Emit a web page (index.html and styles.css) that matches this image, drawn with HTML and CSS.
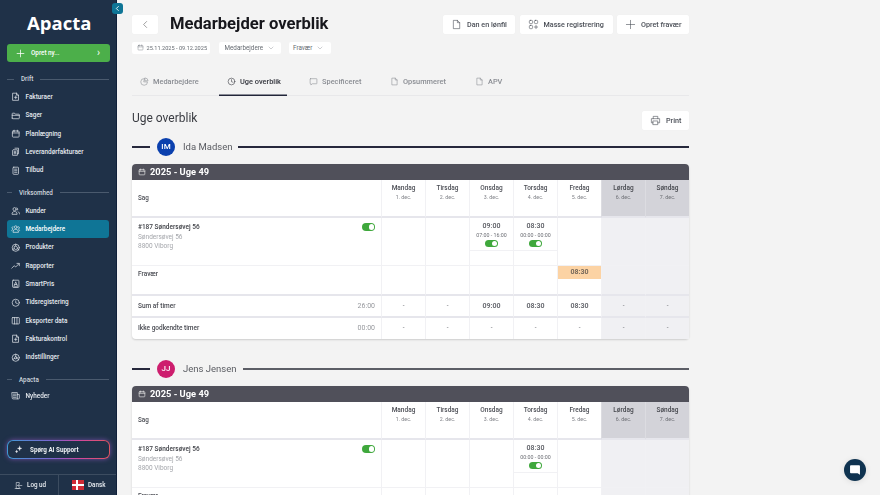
FILE: index.html
```html
<!DOCTYPE html>
<html lang="da">
<head>
<meta charset="utf-8">
<title>Medarbejder overblik</title>
<link rel="stylesheet" href="styles.css">
</head>
<body>
<svg class="defs" width="0" height="0" aria-hidden="true">
  <symbol id="i-file" viewBox="0 0 24 24"><path d="M6 3h8l5 5v13H6zM14 3v5h5"/></symbol>
  <symbol id="i-invoice" viewBox="0 0 24 24"><path d="M5 3h9l5 5v13H5zM14 3v5h5M12 10v7M9 13.500h6"/></symbol>
  <symbol id="i-folder" viewBox="0 0 24 24"><path d="M3 18V7a1.500 1.500 0 0 1 1.500-1.500H9l2 2.500h8.500A1.500 1.500 0 0 1 21 9.500V18a1.500 1.500 0 0 1-1.500 1.500h-15A1.500 1.500 0 0 1 3 18zM3 11h18"/></symbol>
  <symbol id="i-cal" viewBox="0 0 24 24"><rect x="3.500" y="5" width="17" height="15.500" rx="2"/><path d="M3.500 10h17M8 3v4M16 3v4"/></symbol>
  <symbol id="i-files" viewBox="0 0 24 24"><path d="M10 3h9v14h-3M6 7h10v14H4V9zM8 11h4M8 14h4M8 17h4"/></symbol>
  <symbol id="i-doc" viewBox="0 0 24 24"><rect x="5" y="3" width="14" height="18" rx="2"/><path d="M9 8h6M9 12h6M9 16h6"/></symbol>
  <symbol id="i-users" viewBox="0 0 24 24"><circle cx="9" cy="8" r="4"/><path d="M2.500 20c0-4 3-6 6.500-6s6.500 2 6.500 6zM15 4.500a4 4 0 0 1 0 7M18 14.500c2 .8 3.500 2.500 3.500 5.500"/></symbol>
  <symbol id="i-team" viewBox="0 0 24 24"><circle cx="12" cy="8" r="3.500"/><path d="M5 20c0-4 3-6.500 7-6.500s7 2.500 7 6.500zM5.500 7a2.500 2.500 0 0 0-1 5M18.500 7a2.500 2.500 0 0 1 1 5M2 17c0-2 .8-3 2.500-3.500M22 17c0-2-.8-3-2.500-3.500"/></symbol>
  <symbol id="i-box" viewBox="0 0 24 24"><circle cx="12" cy="12" r="9"/><path d="M12 8l4 2.500v4L12 17l-4-2.500v-4zM12 8V3M16 14.500l4 2.500M8 14.500L4 17"/></symbol>
  <symbol id="i-trend" viewBox="0 0 24 24"><path d="M2 18l6-6 4 3 8-8M15 6h6v6"/></symbol>
  <symbol id="i-price" viewBox="0 0 24 24"><rect x="4" y="3" width="16" height="18" rx="1.500"/><path d="M8 17l4-10 4 10M9.500 14h5M7 20h10"/></symbol>
  <symbol id="i-clock" viewBox="0 0 24 24"><circle cx="12" cy="12" r="9"/><path d="M12 7v5.500l4 1.500"/></symbol>
  <symbol id="i-cols" viewBox="0 0 24 24"><rect x="3" y="4" width="18" height="16" rx="1.500"/><path d="M9 4v16M15 4v16"/></symbol>
  <symbol id="i-gear" viewBox="0 0 24 24"><circle cx="12" cy="12" r="9"/><circle cx="12" cy="12" r="3"/><path d="M12 3v6M4.500 16.500L9.500 13.500M19.500 16.500l-5-3"/></symbol>
  <symbol id="i-news" viewBox="0 0 24 24"><path d="M3 4h13v16H5a2 2 0 0 1-2-2zM16 9h5v9a2 2 0 0 1-2 2h-3M6 8h7M6 12h7M6 16h7"/></symbol>
  <symbol id="i-pie" viewBox="0 0 24 24"><path d="M11 4a9 9 0 1 0 9 9h-9zM14 2.500A8 8 0 0 1 21.500 10H14z"/></symbol>
  <symbol id="i-chat" viewBox="0 0 24 24"><path d="M4 4.500h16a1 1 0 0 1 1 1V17a1 1 0 0 1-1 1H9l-4 3v-3H4a1 1 0 0 1-1-1V5.500a1 1 0 0 1 1-1z"/></symbol>
  <symbol id="i-plus" viewBox="0 0 24 24"><path d="M12 3v18M3 12h18"/></symbol>
  <symbol id="i-apps" viewBox="0 0 24 24"><rect x="3" y="3" width="7" height="7" rx="2"/><rect x="14" y="3" width="7" height="7" rx="2"/><rect x="3" y="14" width="7" height="7" rx="2"/><path d="M17.500 14v7M14 17.500h7"/></symbol>
  <symbol id="i-print" viewBox="0 0 24 24"><path d="M7 8V3h10v5M7 17H3V8h18v9h-4M7 13h10v8H7z"/></symbol>
  <symbol id="i-chev-d" viewBox="0 0 24 24"><path d="M4 8l8 8 8-8"/></symbol>
  <symbol id="i-spark" viewBox="0 0 24 24"><path d="M15 3l1.500 4.500L21 9l-4.500 1.500L15 15l-1.500-4.500L9 9l4.500-1.500zM7 14l1 2.500 2.500 1L8 18.500 7 21l-1-2.500-2.500-1L6 16.500z"/></symbol>
  <symbol id="i-logout" viewBox="0 0 24 24"><path d="M14 8V4H6v16h8v-4M3 20h14M21 12H10M13 9l-3 3 3 3"/></symbol>
</svg>

<div class="app">
  <aside class="sidebar">
    <div class="logo">Apacta</div>
    <button class="new-btn"><svg class="ico-plus"><use href="#i-plus"/></svg><span>Opret ny...</span><span class="new-chev">›</span></button>

    <div class="sec-label"><span>Drift</span></div>
    <nav class="nav">
      <a class="nav-item"><svg class="ico"><use href="#i-invoice"/></svg>Fakturaer</a>
      <a class="nav-item"><svg class="ico"><use href="#i-folder"/></svg>Sager</a>
      <a class="nav-item"><svg class="ico"><use href="#i-cal"/></svg>Planlægning</a>
      <a class="nav-item"><svg class="ico"><use href="#i-files"/></svg>Leverandørfakturaer</a>
      <a class="nav-item"><svg class="ico"><use href="#i-doc"/></svg>Tilbud</a>
    </nav>

    <div class="sec-label sec-mid"><span>Virksomhed</span></div>
    <nav class="nav">
      <a class="nav-item"><svg class="ico"><use href="#i-users"/></svg>Kunder</a>
      <a class="nav-item active"><svg class="ico"><use href="#i-team"/></svg>Medarbejdere</a>
      <a class="nav-item"><svg class="ico"><use href="#i-box"/></svg>Produkter</a>
      <a class="nav-item"><svg class="ico"><use href="#i-trend"/></svg>Rapporter</a>
      <a class="nav-item"><svg class="ico"><use href="#i-price"/></svg>SmartPris</a>
      <a class="nav-item"><svg class="ico"><use href="#i-clock"/></svg>Tidsregistering</a>
      <a class="nav-item"><svg class="ico"><use href="#i-cols"/></svg>Eksporter data</a>
      <a class="nav-item"><svg class="ico"><use href="#i-invoice"/></svg>Fakturakontrol</a>
      <a class="nav-item"><svg class="ico"><use href="#i-gear"/></svg>Indstillinger</a>
    </nav>

    <div class="sec-label sec-last"><span>Apacta</span></div>
    <nav class="nav nav-last">
      <a class="nav-item"><svg class="ico"><use href="#i-news"/></svg>Nyheder</a>
    </nav>

    <button class="ai-btn"><span class="ai-inner"><svg class="ico-spark"><use href="#i-spark"/></svg>Spørg AI Support</span></button>

    <div class="side-foot">
      <a class="foot-cell foot-log"><svg class="ico-log"><use href="#i-logout"/></svg>Log ud</a>
      <a class="foot-cell foot-lang"><span class="flag"></span>Dansk</a>
    </div>
  </aside>

  <button class="collapse"><svg viewBox="0 0 24 24"><path d="M15 5l-7 7 7 7"/></svg></button>

  <main class="main">
    <header class="top">
      <button class="card-btn back"><svg viewBox="0 0 24 24"><path d="M15 4l-8 8 8 8"/></svg></button>
      <h1>Medarbejder overblik</h1>
      <div class="actions">
        <button class="card-btn act act-a"><svg><use href="#i-file"/></svg>Dan en lønfil</button>
        <button class="card-btn act act-b"><svg><use href="#i-apps"/></svg>Masse registrering</button>
        <button class="card-btn act act-c"><svg><use href="#i-plus"/></svg>Opret fravær</button>
      </div>
    </header>

    <div class="filters">
      <span class="chip chip-date"><svg><use href="#i-cal"/></svg>25.11.2025 - 09.12.2025</span>
      <span class="chip chip-emp">Medarbejdere<svg class="cv"><use href="#i-chev-d"/></svg></span>
      <span class="chip chip-abs">Fravær<svg class="cv"><use href="#i-chev-d"/></svg></span>
    </div>

    <div class="tabs">
      <a class="tab t1"><svg><use href="#i-pie"/></svg>Medarbejdere</a>
      <a class="tab t2 active"><svg><use href="#i-clock"/></svg>Uge overblik</a>
      <a class="tab t3"><svg><use href="#i-chat"/></svg>Specificeret</a>
      <a class="tab t4"><svg><use href="#i-file"/></svg>Opsummeret</a>
      <a class="tab t5"><svg><use href="#i-file"/></svg>APV</a>
    </div>

    <div class="section-head">
      <h2>Uge overblik</h2>
      <button class="card-btn print"><svg><use href="#i-print"/></svg>Print</button>
    </div>

    <section class="person">
      <div class="person-line"><span class="rule short"></span><span class="avatar av-blue">IM</span><span class="pname">Ida Madsen</span><span class="rule"></span></div>
      <div class="week">
        <div class="week-head"><svg><use href="#i-cal"/></svg>2025 - Uge 49</div>
        <div class="grid">
          <div class="c hd sag">Sag</div>
          <div class="c hd day"><b>Mandag</b><i>1. dec.</i></div>
          <div class="c hd day"><b>Tirsdag</b><i>2. dec.</i></div>
          <div class="c hd day"><b>Onsdag</b><i>3. dec.</i></div>
          <div class="c hd day"><b>Torsdag</b><i>4. dec.</i></div>
          <div class="c hd day"><b>Fredag</b><i>5. dec.</i></div>
          <div class="c hd day we"><b>Lørdag</b><i>6. dec.</i></div>
          <div class="c hd day we"><b>Søndag</b><i>7. dec.</i></div>

          <div class="c job r-job"><div class="job-top"><span class="job-title">#187 Søndersøvej 56</span><span class="tog"></span></div><div class="addr">Søndersøvej 56</div><div class="addr">8800 Viborg</div></div>
          <div class="c r-job"></div>
          <div class="c r-job"></div>
          <div class="c r-job entry-cell"><div class="entry"><b>09:00</b><i>07:00 - 16:00</i><span class="tog"></span></div></div>
          <div class="c r-job entry-cell"><div class="entry"><b>08:30</b><i>00:00 - 00:00</i><span class="tog"></span></div></div>
          <div class="c r-job"></div>
          <div class="c r-job wl"></div>
          <div class="c r-job wl"></div>

          <div class="c r-abs lbl">Fravær</div>
          <div class="c r-abs"></div>
          <div class="c r-abs"></div>
          <div class="c r-abs"></div>
          <div class="c r-abs"></div>
          <div class="c r-abs"><div class="abs-tag">08:30</div></div>
          <div class="c r-abs wl"></div>
          <div class="c r-abs wl"></div>

          <div class="c r-sum sumlbl"><span>Sum af timer</span><em>26:00</em></div>
          <div class="c r-sum val">-</div>
          <div class="c r-sum val">-</div>
          <div class="c r-sum val b">09:00</div>
          <div class="c r-sum val b">08:30</div>
          <div class="c r-sum val b">08:30</div>
          <div class="c r-sum val wl">-</div>
          <div class="c r-sum val wl">-</div>

          <div class="c r-un sumlbl"><span>Ikke godkendte timer</span><em>00:00</em></div>
          <div class="c r-un val">-</div>
          <div class="c r-un val">-</div>
          <div class="c r-un val">-</div>
          <div class="c r-un val">-</div>
          <div class="c r-un val">-</div>
          <div class="c r-un val wl">-</div>
          <div class="c r-un val wl">-</div>
        </div>
      </div>
    </section>

    <section class="person">
      <div class="person-line"><span class="rule short"></span><span class="avatar av-pink">JJ</span><span class="pname">Jens Jensen</span><span class="rule grey"></span></div>
      <div class="week">
        <div class="week-head"><svg><use href="#i-cal"/></svg>2025 - Uge 49</div>
        <div class="grid">
          <div class="c hd sag">Sag</div>
          <div class="c hd day"><b>Mandag</b><i>1. dec.</i></div>
          <div class="c hd day"><b>Tirsdag</b><i>2. dec.</i></div>
          <div class="c hd day"><b>Onsdag</b><i>3. dec.</i></div>
          <div class="c hd day"><b>Torsdag</b><i>4. dec.</i></div>
          <div class="c hd day"><b>Fredag</b><i>5. dec.</i></div>
          <div class="c hd day we"><b>Lørdag</b><i>6. dec.</i></div>
          <div class="c hd day we"><b>Søndag</b><i>7. dec.</i></div>

          <div class="c job r-job"><div class="job-top"><span class="job-title">#187 Søndersøvej 56</span><span class="tog"></span></div><div class="addr">Søndersøvej 56</div><div class="addr">8800 Viborg</div></div>
          <div class="c r-job"></div>
          <div class="c r-job"></div>
          <div class="c r-job"></div>
          <div class="c r-job entry-cell"><div class="entry"><b>08:30</b><i>00:00 - 00:00</i><span class="tog"></span></div></div>
          <div class="c r-job"></div>
          <div class="c r-job wl"></div>
          <div class="c r-job wl"></div>

          <div class="c r-abs lbl">Fravær</div>
          <div class="c r-abs"></div>
          <div class="c r-abs"></div>
          <div class="c r-abs"></div>
          <div class="c r-abs"></div>
          <div class="c r-abs"></div>
          <div class="c r-abs wl"></div>
          <div class="c r-abs wl"></div>
        </div>
      </div>
    </section>
  </main>

  <button class="chat-bubble"><svg viewBox="0 0 24 24"><path d="M5 4h14a1.500 1.500 0 0 1 1.500 1.500V20l-4-2.500H5A1.500 1.500 0 0 1 3.500 16V5.500A1.500 1.500 0 0 1 5 4z"/></svg></button>
</div>
</body>
</html>
```

FILE: styles.css
```css
* { box-sizing: border-box; }
html, body { margin: 0; height: 495px; overflow: hidden; }
body { font-family: Roboto, "Liberation Sans", sans-serif; background: #f3f3f3; color: #1c1c22; }
button { font-family: inherit; border: 0; padding: 0; margin: 0; background: none; }
i, em { font-style: normal; }
svg { fill: none; stroke: currentColor; stroke-width: 1.5; stroke-linecap: round; stroke-linejoin: round; }
.defs { position: absolute; }

.app { display: flex; height: 495px; position: relative; overflow: hidden; filter: blur(.3px); }

/* sidebar */
.sidebar { width: 117px; flex: none; height: 495px; background: #1f3148; border-right: 1px solid #10203a; display: flex; flex-direction: column; color: #e7ebf0; padding: 0; }
.logo { height: 44px; padding: 10px 0 0 27px; font-family: "Open Sans", Roboto, sans-serif; font-size: 18.500px; line-height: 26px; font-weight: 700; color: #fff; }
.new-btn { margin-left: 7px; width: 103px; height: 18px; border-radius: 3px; background: #4caf4a; color: #fff; display: flex; align-items: center; font-size: 6.300px; font-weight: 500; padding: 0 10px 0 9px; flex: none; }
.ico-plus { width: 9px; height: 9px; margin-right: 6px; stroke-width: 2; }
.new-chev { margin-left: auto; font-size: 10px; line-height: 10px; font-weight: 400; }
.sec-label { display: flex; align-items: center; margin: 11px 7px 0; height: 12px; font-size: 6.300px; font-weight: 500; color: #cfd6de; flex: none; }
.sec-label::before { content: ""; width: 7px; height: 1px; background: #4a5a6e; margin-right: 7px; }
.sec-label::after { content: ""; flex: 1; height: 1px; background: #4a5a6e; margin-left: 7px; }
.sec-mid { margin-top: 7px; }
.sec-mid::before { width: 5px; margin-right: 7px; }
.sec-last { margin-top: 7px; }
.sec-last::before { width: 5px; margin-right: 7px; }
.nav { display: flex; flex-direction: column; margin-top: 3px; }
.nav-last { margin-top: 1px; }
.nav-item { height: 18.330px; margin: 0 7px; padding-left: 4px; border-radius: 3px; display: flex; align-items: center; font-size: 6.400px; font-weight: 500; color: #e6eaef; white-space: nowrap; }
.nav-item.active { background: #0f7596; color: #fff; }
.ico { width: 9.500px; height: 9.500px; margin-right: 5px; flex: none; stroke-width: 1.800; color: #e3e7ec; }

.ai-btn { margin: auto 0 0 7px; width: 103px; height: 19px; border-radius: 6px; padding: 1px; flex: none; background: linear-gradient(90deg, #3f9bd6, #7d62d0 45%, #d0489e 70%, #df5560); box-shadow: 0 0 5px rgba(150, 90, 200, .7); }
.ai-inner { display: flex; align-items: center; height: 100%; background: #1f3148; border-radius: 5px; font-size: 6.300px; font-weight: 700; color: #f0f2f5; padding-left: 6px; }
.ico-spark { width: 9px; height: 9px; margin-right: 7px; fill: #f0f2f5; stroke-width: .8; }
.side-foot { margin-top: 15px; height: 21px; border-top: 1px solid #3c4c60; display: flex; flex: none; }
.foot-cell { display: flex; align-items: center; font-size: 6.300px; font-weight: 500; color: #e7ebf0; }
.foot-log { width: 59px; border-right: 1px solid #3c4c60; padding-left: 14px; }
.ico-log { width: 9px; height: 9px; margin-right: 4px; }
.foot-lang { padding-left: 13px; }
.flag { width: 12px; height: 10px; margin-right: 4px; background:
  linear-gradient(#fff, #fff) 4px 0 / 2px 100% no-repeat,
  linear-gradient(#fff, #fff) 0 4px / 100% 2px no-repeat, #cf2b36; }

.collapse { position: absolute; left: 112px; top: 3px; width: 11px; height: 11px; border-radius: 3px; background: #0f7596; color: #fff; display: flex; align-items: center; justify-content: center; z-index: 2; }
.collapse svg { width: 7px; height: 7px; stroke-width: 3; }

/* main */
.main { flex: none; width: 763px; padding: 15px 0 0 15px; }
.main > * { width: 557px; }
.card-btn { background: #fff; border-radius: 2px; box-shadow: 0 0 1px rgba(0,0,0,.06); display: flex; align-items: center; color: #4b4f57; font-size: 7.200px; font-weight: 500; height: 18.500px; }
.card-btn svg { flex: none; }

.top { display: flex; align-items: center; height: 18.500px; }
.back { width: 26px; justify-content: center; color: #555; flex: none; }
.back svg { width: 9px; height: 9px; stroke-width: 1.500; }
h1 { margin: 0 0 0 12px; font-size: 16.600px; font-weight: 700; line-height: 18px; color: #17171c; white-space: nowrap; }
.actions { margin-left: auto; display: flex; gap: 4.500px; }
.act { padding-left: 8px; white-space: nowrap; }
.act svg { width: 11px; height: 11px; margin-right: 5px; stroke-width: 1.300; }
.act-a { width: 72px; }
.act-b { width: 93px; }
.act-c { width: 72px; }

.filters { display: flex; margin-top: 8.500px; height: 12px; }
.chip { background: #fff; border-radius: 2px; display: flex; align-items: center; color: #666b72; height: 11.500px; white-space: nowrap; }
.chip svg { width: 7px; height: 7px; margin-right: 3px; stroke-width: 1.300; }
.chip .cv { margin: 0 0 0 5px; width: 6px; height: 6px; }
.chip-date { width: 78px; padding-left: 4.500px; font-size: 5.600px; }
.chip-emp { width: 62px; margin-left: 9px; padding-left: 5.500px; font-size: 6.300px; }
.chip-abs { width: 42px; margin-left: 7.500px; padding-left: 4.500px; font-size: 6.300px; }

.tabs { display: flex; margin-top: 14px; height: 28px; border-bottom: 1px solid #e8e8ea; position: relative; }
.tab { display: flex; align-items: center; height: 28px; font-size: 7.400px; font-weight: 500; color: #8a8d93; white-space: nowrap; padding-bottom: 1px; }
.tab svg { width: 9px; height: 9px; margin-right: 4px; stroke-width: 1.500; }
.t1 { margin-left: 8px; width: 79px; }
.t2 { width: 68px; padding-left: 8px; color: #33353d; font-weight: 500; box-shadow: inset 0 -1.500px 0 #22263a; }
.t3 { margin-left: 22px; width: 81px; }
.t4 { width: 85px; }

.section-head { display: flex; align-items: center; justify-content: space-between; margin-top: 14.500px; height: 19px; }
h2 { margin: 0 0 4px; font-size: 12px; font-weight: 400; line-height: 14px; color: #3a3c42; }
.print { width: 47px; padding-left: 7.500px; height: 19px; }
.print svg { width: 11px; height: 11px; margin-right: 5.500px; stroke-width: 1.300; }

.person { height: 222px; padding-top: 8px; }
.person-line { display: flex; align-items: center; height: 18px; font-size: 9.500px; color: #5a5c62; }
.rule { flex: 1; height: 2px; background: #26283c; }
.rule.grey { background: #5c5e66; }
.rule.short { flex: none; width: 18px; }
.avatar { width: 18px; height: 18px; border-radius: 50%; color: #fff; display: flex; align-items: center; justify-content: center; font-size: 8px; font-weight: 500; margin-left: 7px; flex: none; }
.av-blue { background: #0b40ae; }
.av-pink { background: #cd1e6e; }
.pname { margin: 0 6px 0 8px; white-space: nowrap; }

.week { margin-top: 8px; border-radius: 4px; box-shadow: 0 1px 2px rgba(0,0,0,.16); background: #fff; }
.week-head { height: 16px; background: #50505a; border-radius: 4px 4px 0 0; color: #fff; font-size: 9.300px; font-weight: 700; display: flex; align-items: center; padding-left: 6px; }
.week-head svg { width: 8px; height: 8px; margin-right: 4px; stroke-width: 2; color: #e6e6e6; }

.grid { display: grid; grid-template-columns: 249px repeat(7, 44px); grid-template-rows: 38px 48px 30px 22px 21.500px; font-size: 6.300px; color: #4a4c53; }
.c { border-left: 1px solid #f1f1f4; border-bottom: 1px solid #f1f1f4; min-width: 0; }
.hd { border-bottom: 2px solid #e6e6ec; }
.sag { border-left: 0; display: flex; align-items: center; padding-left: 6px; font-weight: 500; }
.day { display: flex; flex-direction: column; align-items: center; padding-top: 4px; }
.day b { font-size: 6.500px; line-height: 9px; font-weight: 500; color: #4d4f56; }
.day i { font-size: 5.300px; line-height: 8px; color: #7d7f85; }
.we { background: #d3d3d9; border-left-color: #dcdce1; }
.we b { color: #44464c; }
.we i { color: #6c6e74; }
.wl { background: #f0f0f3; }
.job { border-left: 0; padding: 5px 6px; }
.job-top { display: flex; justify-content: space-between; align-items: center; height: 9px; margin-bottom: 1px; }
.job-title { font-weight: 500; color: #3f4147; font-size: 6.500px; }
.addr { color: #a4a6ab; line-height: 9.500px; font-size: 6.500px; }
.tog { display: block; width: 13px; height: 7.500px; border-radius: 4px; background: #3fa83c; position: relative; flex: none; }
.tog::after { content: ""; position: absolute; right: 1px; top: 1px; width: 5.500px; height: 5.500px; border-radius: 50%; background: #fff; }
.entry { height: 33px; border-bottom: 1px solid #f1f1f4; display: flex; flex-direction: column; align-items: center; padding-top: 4px; }
.entry b { font-size: 7px; line-height: 9px; font-weight: 500; color: #55575e; }
.entry i { font-size: 5.300px; line-height: 8px; color: #6c6e74; margin-bottom: 1px; }
.lbl { border-left: 0; padding: 4px 6px; color: #4a4c53; font-weight: 500; font-size: 6.500px; }
.abs-tag { height: 13px; background: #fcd3a4; color: #77695a; display: flex; align-items: center; justify-content: center; font-weight: 700; font-size: 7px; }
.r-abs { border-bottom: 2px solid #e6e6ec; }
.r-sum { border-bottom: 2px solid #e6e6ec; }
.r-un { border-bottom: 0; }
.sumlbl { border-left: 0; display: flex; justify-content: space-between; align-items: center; padding: 0 6px; font-weight: 500; font-size: 6.500px; }
.sumlbl em { color: #96989d; font-size: 7px; font-weight: 400; }
.val { display: flex; align-items: center; justify-content: center; color: #75777d; }
.val.b { font-weight: 700; font-size: 7px; color: #6a6c72; }

.chat-bubble { position: absolute; left: 844px; top: 459px; width: 22px; height: 22px; border-radius: 50%; background: #0f3350; display: flex; align-items: center; justify-content: center; box-shadow: 0 1px 6px rgba(0,0,0,.1); z-index: 3; }
.chat-bubble svg { width: 14px; height: 14px; fill: #fff; stroke: none; }
```
